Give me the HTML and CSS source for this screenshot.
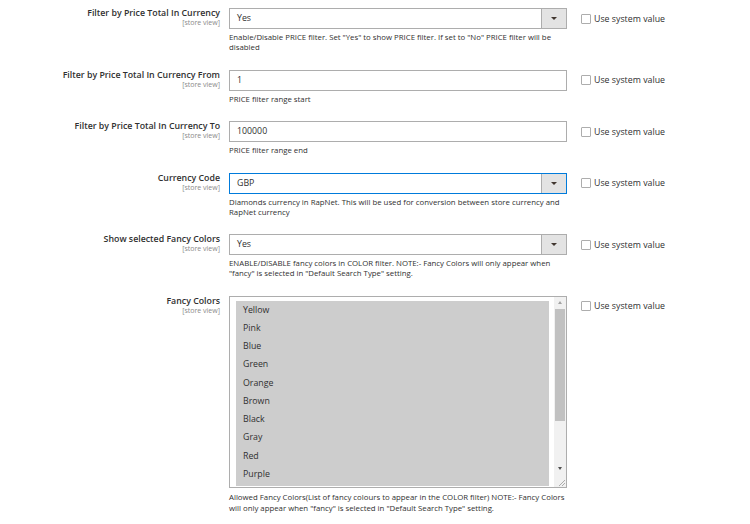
FILE: index.html
```html
<!DOCTYPE html>
<html>
<head>
<meta charset="utf-8">
<link rel="stylesheet" href="styles.css">
</head>
<body>
<div class="form">
  <div class="row">
    <div class="label"><span class="title">Filter by Price Total In Currency</span><span class="scope">[store view]</span></div>
    <div class="control">
      <div class="select"><span class="value">Yes</span><span class="arrow"><i></i></span></div>
      <div class="note">Enable/Disable PRICE filter. Set "Yes" to show PRICE filter. If set to "No" PRICE filter will be disabled</div>
    </div>
    <label class="inherit"><span class="box"></span>Use system value</label>
  </div>

  <div class="row">
    <div class="label"><span class="title">Filter by Price Total In Currency From</span><span class="scope">[store view]</span></div>
    <div class="control">
      <div class="input">1</div>
      <div class="note">PRICE filter range start</div>
    </div>
    <label class="inherit"><span class="box"></span>Use system value</label>
  </div>

  <div class="row">
    <div class="label"><span class="title">Filter by Price Total In Currency To</span><span class="scope">[store view]</span></div>
    <div class="control">
      <div class="input">100000</div>
      <div class="note">PRICE filter range end</div>
    </div>
    <label class="inherit"><span class="box"></span>Use system value</label>
  </div>

  <div class="row">
    <div class="label"><span class="title">Currency Code</span><span class="scope">[store view]</span></div>
    <div class="control">
      <div class="select focus"><span class="value">GBP</span><span class="arrow"><i></i></span></div>
      <div class="note">Diamonds currency in RapNet. This will be used for conversion between store currency and RapNet currency</div>
    </div>
    <label class="inherit"><span class="box"></span>Use system value</label>
  </div>

  <div class="row">
    <div class="label"><span class="title">Show selected Fancy Colors</span><span class="scope">[store view]</span></div>
    <div class="control">
      <div class="select"><span class="value">Yes</span><span class="arrow"><i></i></span></div>
      <div class="note">ENABLE/DISABLE fancy colors in COLOR filter. NOTE:- Fancy Colors will only appear when "fancy" is selected in "Default Search Type" setting.</div>
    </div>
    <label class="inherit"><span class="box"></span>Use system value</label>
  </div>

  <div class="row">
    <div class="label"><span class="title">Fancy Colors</span><span class="scope">[store view]</span></div>
    <div class="control">
      <div class="multi">
        <div class="options">
          <div class="opt">Yellow</div>
          <div class="opt">Pink</div>
          <div class="opt">Blue</div>
          <div class="opt">Green</div>
          <div class="opt">Orange</div>
          <div class="opt">Brown</div>
          <div class="opt">Black</div>
          <div class="opt">Gray</div>
          <div class="opt">Red</div>
          <div class="opt">Purple</div>
        </div>
        <div class="scrollbar">
          <div class="sb-up"><i></i></div>
          <div class="sb-track"><div class="sb-thumb"></div></div>
          <div class="sb-down"><i></i></div>
          <div class="sb-corner">
            <svg width="10" height="10" viewBox="0 0 10 10"><path d="M9 3 L3 9 M9 6 L6 9" stroke="#9a9a9a" stroke-width="0.8" fill="none"/></svg>
          </div>
        </div>
      </div>
      <div class="note note-multi">Allowed Fancy Colors(List of fancy colours to appear in the COLOR filter) NOTE:- Fancy Colors will only appear when "fancy" is selected in "Default Search Type" setting.</div>
    </div>
    <label class="inherit"><span class="box"></span>Use system value</label>
  </div>
</div>
</body>
</html>
```

FILE: styles.css
```css
* { box-sizing: border-box; }
body {
  margin: 0;
  background: #ffffff;
  font-family: "Open Sans", "Noto Sans", sans-serif;
  color: #303030;
}
.form {
  padding-top: 8px;
}
.row {
  display: grid;
  grid-template-columns: 220px 347px auto;
  margin-bottom: 17.5px;
}
.label {
  display: flex;
  flex-direction: column;
  align-items: flex-end;
  text-align: right;
}
.title {
  font-size: 8.8px;
  font-weight: 600;
  line-height: 11px;
  color: #303030;
}
.scope {
  font-size: 7px;
  line-height: 7px;
  color: #8a8a8a;
}
.control {
  margin-left: 9px;
}
.input, .select {
  height: 21px;
  border: 1px solid #adadad;
  font-size: 8.8px;
  line-height: 19px;
  padding-left: 7px;
  color: #303030;
  background: #fff;
}
.select {
  display: flex;
  padding-left: 0;
}
.select .value {
  flex: 1;
  padding-left: 7px;
}
.select.focus {
  border-color: #007bdb;
}
.select .arrow {
  width: 25px;
  background: #e3e3e3;
  border-left: 1px solid #adadad;
  display: flex;
  align-items: center;
  justify-content: center;
}
.select .arrow i {
  width: 0;
  height: 0;
  border-left: 3px solid transparent;
  border-right: 3px solid transparent;
  border-top: 3px solid #41362f;
}
.note {
  margin-top: 3px;
  font-size: 7.8px;
  line-height: 10px;
  color: #303030;
}
.note-multi {
  margin-top: 4px;
  line-height: 11px;
}
.inherit {
  margin-left: 14px;
  display: flex;
  align-items: center;
  height: 21px;
  font-size: 8.8px;
  color: #303030;
}
.inherit .box {
  width: 10px;
  height: 10px;
  border: 1px solid #adadad;
  border-radius: 1px;
  margin-right: 3px;
  background: #fff;
}
.multi {
  height: 192px;
  border: 1px solid #adadad;
  display: flex;
  padding: 4px 0 1px 6px;
}
.options {
  width: 314px;
  background: #cdcdcd;
  overflow: hidden;
}
.opt {
  height: 18.25px;
  line-height: 18.25px;
  font-size: 8.8px;
  padding-left: 7px;
  color: #303030;
}
.scrollbar {
  margin-left: 5px;
  margin-top: -4px;
  margin-bottom: -1px;
  width: 12px;
  display: flex;
  flex-direction: column;
  background: #f1f1f1;
}
.sb-up, .sb-down {
  height: 12px;
  display: flex;
  align-items: center;
  justify-content: center;
}
.sb-up i {
  width: 0; height: 0;
  border-left: 2.5px solid transparent;
  border-right: 2.5px solid transparent;
  border-bottom: 3px solid #a3a3a3;
}
.sb-down i {
  width: 0; height: 0;
  border-left: 2.5px solid transparent;
  border-right: 2.5px solid transparent;
  border-top: 3px solid #505050;
}
.sb-track {
  flex: 1;
  padding: 0 1px;
}
.sb-thumb {
  height: 112px;
  background: #c1c1c1;
}
.sb-corner {
  height: 12px;
  display: flex;
  align-items: flex-end;
  justify-content: flex-end;
  background: #f1f1f1;
}
```
